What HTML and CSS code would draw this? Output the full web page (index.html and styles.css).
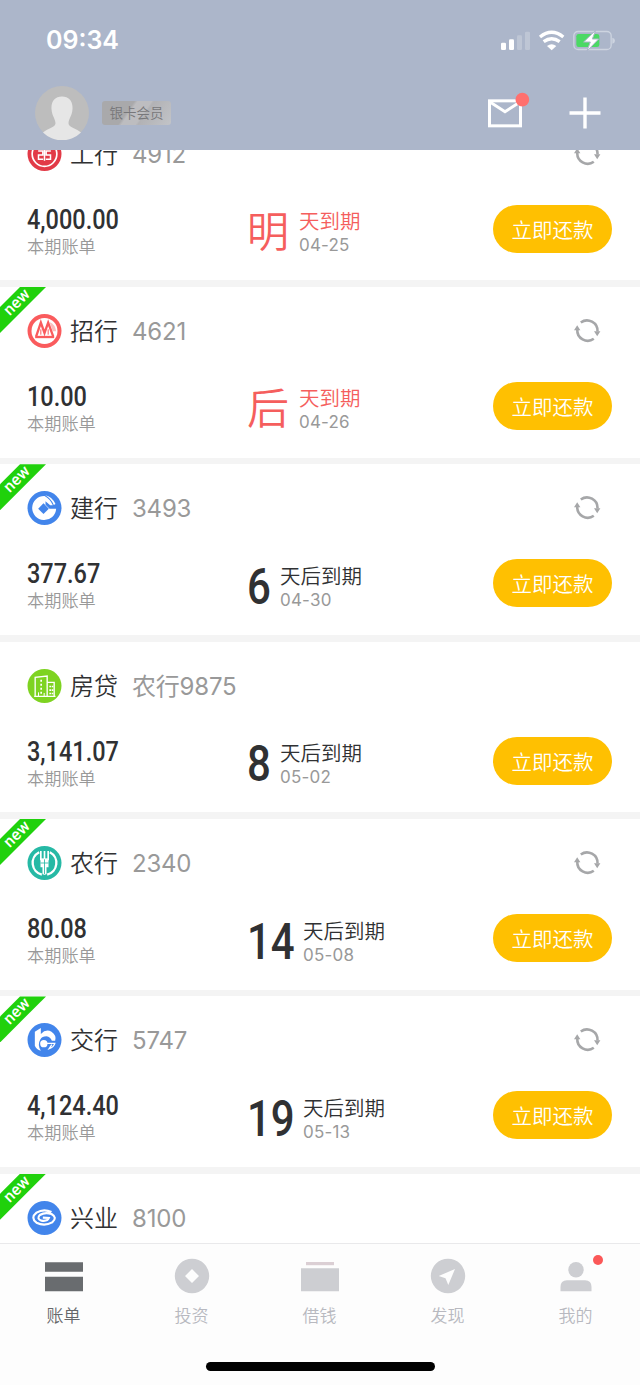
FILE: index.html
```html
<!DOCTYPE html>
<html lang="zh-CN">
<head>
<meta charset="utf-8">
<title>账单</title>
<link rel="stylesheet" href="styles.css">
</head>
<body>
<svg class="defs" width="0" height="0" aria-hidden="true">
  <symbol id="refresh" viewBox="0 0 28 28">
    <path d="M7.800 5.500A10.500 10.500 0 0 1 24.500 14.500M20.800 21.800A10.500 10.500 0 0 1 4.300 12.500" fill="none" stroke="#a6a7a9" stroke-width="2.600"/>
    <path d="M1 13.200 4.200 8.200 7.400 13.200ZM21 14.200H27.400L24.200 19.200Z" fill="#a6a7a9"/>
  </symbol>
</svg>
<header class="top">
  <div class="status">
    <span class="time">09:34</span>
    <svg class="status-icons" viewBox="120 84 348 66">
      <g fill="#fff"><rect x="123" y="125" width="15" height="22" rx="4"/><rect x="147" y="115" width="15" height="32" rx="4"/><g opacity=".22"><rect x="171" y="103" width="15" height="44" rx="4"/><rect x="195" y="92" width="15" height="55" rx="4"/></g></g>
      <g fill="none" stroke="#fff" stroke-width="10"><path d="M240 108Q275 80 310 108M251 122Q275 104 299 122"/></g>
      <path d="M261 135Q275 124 289 135L275 148Z" fill="#fff"/>
      <rect x="341.500" y="91.500" width="112" height="54" rx="13" fill="none" stroke="#cdd4e0" stroke-width="4"/>
      <path d="M457 110Q465 112 465 119T457 128Z" fill="#cdd4e0"/>
      <rect x="349" y="99" width="69" height="39" rx="7" fill="#4bd964"/>
      <path d="M407 88 371 123H391L381 150 416 114H397Z" fill="#fff" stroke="#acb6ca" stroke-width="3"/>
    </svg>
  </div>
  <div class="profile">
    <svg class="avatar" viewBox="0 0 54 54"><circle cx="27" cy="27" r="27" fill="#bdbdbd"/><path d="M27 10.500C20 10.500 16 15 16.500 23C17 30 20 32 20.500 37C20.800 41.500 12 42.500 8 46.500A27 27 0 0 0 46 46.500C42 42.500 33.200 41.500 33.500 37C34 32 37 30 37.500 23C38 15 34 10.500 27 10.500Z" fill="#e6e6e6"/></svg>
    <span class="level">银卡会员</span>
    <svg class="mail" viewBox="81 275 129 111"><rect x="88.500" y="301.500" width="93" height="75" fill="none" stroke="#fff" stroke-width="9"/><path d="M90 305 135 334 180 305" fill="none" stroke="#fff" stroke-width="9"/><circle cx="187" cy="298" r="20.500" fill="#ff706e"/></svg>
    <svg class="plus" viewBox="0 0 32 32"><path d="M16 .5V31.500M.5 16H31.500" stroke="#fff" stroke-width="3.400"/></svg>
  </div>
</header>
<main class="bills">
  <div class="list">
    <section class="card">
      <div class="bank">
        <svg class="logo" viewBox="0 0 102 102"><circle cx="51" cy="51" r="51" fill="#e23a47"/><circle cx="51" cy="51" r="37" fill="none" stroke="#fff" stroke-width="5"/><path d="M32 42H46V54H33V67H47M70 42H56V54H69V67H55M51 34V71" fill="none" stroke="#fff" stroke-width="4.500"/></svg>
        <span class="name">工行</span><span class="tail">4912</span>
        <svg class="refresh"><use href="#refresh"/></svg>
      </div>
      <div class="detail">
        <div class="amount"><b>4,000.00</b><small>本期账单</small></div>
        <div class="due urgent"><span class="word">明</span><div><p>天到期</p><time>04-25</time></div></div>
        <button class="pay">立即还款</button>
      </div>
    </section>
    <section class="card">
      <span class="ribbon"><i>new</i></span>
      <div class="bank">
        <svg class="logo" viewBox="0 0 102 102"><circle cx="51" cy="51" r="51" fill="#fa5b5d"/><circle cx="51" cy="51" r="39" fill="#fff"/><path d="M66 24A34 34 0 0 1 86 52H76Z" fill="#fcbdbd"/><path d="M26 67 40 26 51 57 62 26 77 67" fill="none" stroke="#fa5b5d" stroke-width="7"/><path d="M40 46V62M62 46V62" stroke="#fa5b5d" stroke-width="3"/><path d="M23 69H80" stroke="#fa5b5d" stroke-width="7"/></svg>
        <span class="name">招行</span><span class="tail">4621</span>
        <svg class="refresh"><use href="#refresh"/></svg>
      </div>
      <div class="detail">
        <div class="amount"><b>10.00</b><small>本期账单</small></div>
        <div class="due urgent"><span class="word">后</span><div><p>天到期</p><time>04-26</time></div></div>
        <button class="pay">立即还款</button>
      </div>
    </section>
    <section class="card">
      <span class="ribbon"><i>new</i></span>
      <div class="bank">
        <svg class="logo" viewBox="0 0 102 102"><circle cx="51" cy="51" r="51" fill="#4285eb"/><path d="M51 15A36 36 0 1 0 86 53H66L54 41V31L68 43H76Q68 24 51 15Z" fill="#fff"/><path d="M48 37 64 53 48 69 32 53Z" fill="#4285eb"/><path d="M53 13Q73 17 84 39L79 42Q71 23 53 13Z" fill="#fff"/></svg>
        <span class="name">建行</span><span class="tail">3493</span>
        <svg class="refresh"><use href="#refresh"/></svg>
      </div>
      <div class="detail">
        <div class="amount"><b>377.67</b><small>本期账单</small></div>
        <div class="due"><span class="days one">6</span><div><p>天后到期</p><time>04-30</time></div></div>
        <button class="pay">立即还款</button>
      </div>
    </section>
    <section class="card">
      <div class="bank">
        <svg class="logo" viewBox="0 0 102 102"><circle cx="51" cy="51" r="51" fill="#7ed321"/><path d="M23 82V25L59 21V82M61 40H80V82M20 82H84" fill="none" stroke="#fff" stroke-width="4"/><path d="M41 32V38M41 44V50M41 56V62M41 68V74M68 50V55M68 61V66M68 71V76M75 50V55M75 61V66M75 71V76" stroke="#fff" stroke-width="5"/><path d="M33 70V82M50 72V82" stroke="#fff" stroke-width="3"/></svg>
        <span class="name">房贷</span><span class="tail">农行9875</span>
      </div>
      <div class="detail">
        <div class="amount"><b>3,141.07</b><small>本期账单</small></div>
        <div class="due"><span class="days one">8</span><div><p>天后到期</p><time>05-02</time></div></div>
        <button class="pay">立即还款</button>
      </div>
    </section>
    <section class="card">
      <span class="ribbon"><i>new</i></span>
      <div class="bank">
        <svg class="logo" viewBox="0 0 102 102"><circle cx="51" cy="51" r="51" fill="#26b9a5"/><path d="M35 19A36 36 0 0 0 43 86M67 19A36 36 0 0 1 59 86" fill="none" stroke="#fff" stroke-width="7"/><path d="M40 15V40H62V15M51 15V87" fill="none" stroke="#fff" stroke-width="5"/><path d="M39 38H63V64H57V85H45V64H39Z" fill="#fff"/><path d="M39 51H63M51 40V85" stroke="#26b9a5" stroke-width="2.500"/></svg>
        <span class="name">农行</span><span class="tail">2340</span>
        <svg class="refresh"><use href="#refresh"/></svg>
      </div>
      <div class="detail">
        <div class="amount"><b>80.08</b><small>本期账单</small></div>
        <div class="due"><span class="days two">14</span><div><p>天后到期</p><time>05-08</time></div></div>
        <button class="pay">立即还款</button>
      </div>
    </section>
    <section class="card">
      <span class="ribbon"><i>new</i></span>
      <div class="bank">
        <svg class="logo" viewBox="0 0 102 102"><circle cx="51" cy="51" r="51" fill="#4285eb"/><path d="M22 26 40 15V33Q55 17 72 26Q88 37 83 53H73Q69 42 57 40Q44 40 38 50Q29 65 40 83Q27 80 22 68Z" fill="#fff"/><circle cx="49" cy="62" r="11" fill="#fff"/><path d="M49 61H82Q79 72 65 77L73 65" fill="none" stroke="#fff" stroke-width="4"/></svg>
        <span class="name">交行</span><span class="tail">5747</span>
        <svg class="refresh"><use href="#refresh"/></svg>
      </div>
      <div class="detail">
        <div class="amount"><b>4,124.40</b><small>本期账单</small></div>
        <div class="due"><span class="days two">19</span><div><p>天后到期</p><time>05-13</time></div></div>
        <button class="pay">立即还款</button>
      </div>
    </section>
    <section class="card">
      <span class="ribbon"><i>new</i></span>
      <div class="bank">
        <svg class="logo" viewBox="0 0 102 102"><circle cx="51" cy="51" r="51" fill="#4285eb"/><path d="M72 33Q48 22 27 35Q8 50 27 65Q51 77 74 64Q91 50 72 39Q53 32 37 42Q26 53 42 59Q60 62 64 51L46 50" fill="none" stroke="#fff" stroke-width="6.500"/></svg>
        <span class="name">兴业</span><span class="tail">8100</span>
      </div>
    </section>
  </div>
</main>
<nav class="tabs">
  <div class="tab-row">
    <a class="tab active"><svg viewBox="0 0 40 36"><path d="M1 4.300H39V13.700H1ZM1 18.700H39V33.300H1Z"/></svg>账单</a>
    <a class="tab"><svg viewBox="0 0 40 36"><path fill-rule="evenodd" d="M20 .8A17.200 17.200 0 1 1 20 35.200A17.200 17.200 0 1 1 20 .8ZM20 11 13 18 20 25 27 18Z"/></svg>投资</a>
    <a class="tab"><svg viewBox="0 0 40 36"><path d="M6 4H34V7.200H6Z" fill="#dbcfd4"/><path d="M1 10.300H39V33.300H1Z"/></svg>借钱</a>
    <a class="tab"><svg viewBox="0 0 40 36"><path fill-rule="evenodd" d="M20 .8A17.200 17.200 0 1 1 20 35.200A17.200 17.200 0 1 1 20 .8ZM27 11 10.700 18 17.500 20.300 20.300 27Z"/></svg>发现</a>
    <a class="tab"><svg viewBox="0 0 40 36"><circle cx="20" cy="11.800" r="7.700"/><path d="M4.500 33.300V29Q4.500 22.300 11 22.300H29Q35.500 22.300 35.500 29V33.300Z"/></svg>我的<span class="dot"></span></a>
  </div>
  <div class="home"></div>
</nav>
</body>
</html>
```
FILE: styles.css
```css
* { box-sizing: border-box; }
body {
  margin: 0;
  width: 640px;
  height: 1385px;
  overflow: hidden;
  display: flex;
  flex-direction: column;
  background: #fff;
  color: #303133;
  font-family: Inter, "Noto Sans CJK SC", sans-serif;
  font-weight: 350;
}
.defs { position: absolute; }
svg { display: block; flex: none; }
p { margin: 0; }

.top { height: 150px; flex: none; background: #acb6ca; }
.status { height: 75px; padding: 4px 24px 0 46px; display: flex; align-items: center; justify-content: space-between; }
.time { color: #fff; font-size: 25px; font-weight: 600; letter-spacing: 0; }
.status-icons { width: 116px; height: 22px; }
.profile { height: 75px; padding: 0 39px 0 35px; display: flex; align-items: center; }
.avatar { width: 54px; height: 54px; }
.level {
  width: 69px;
  height: 24px;
  margin-left: 13px;
  border-radius: 3px;
  background: linear-gradient(125deg, #a9a9ab 0 38%, #bdbdc0 42% 58%, #b2b2b5 61%, #c2c4c8);
  color: #77777a;
  font-size: 13.500px;
  line-height: 24px;
  text-align: center;
}
.mail { width: 43px; height: 37px; margin: -5px 0 0 316px; }
.plus { width: 32px; height: 32px; margin-left: auto; }

.bills { height: 1093px; flex: none; overflow: hidden; }
.list { margin-top: -40.500px; display: flex; flex-direction: column; gap: 6.700px; background: #f4f4f4; }
.card { position: relative; height: 170.700px; flex: none; background: #fff; }
.bank { height: 88px; padding: 0 39px 0 27px; display: flex; align-items: center; }
.logo { width: 35px; height: 34px; }
.name { margin-left: 8px; padding-top: 2px; font-size: 24px; line-height: 34px; width: 48px; white-space: nowrap; }
.tail { margin-left: 14px; padding-top: 2px; font-size: 24px; font-weight: 400; line-height: 34px; color: #999; white-space: nowrap; letter-spacing: -.2px; }
.refresh { width: 28px; height: 28px; margin-left: auto; }
.detail { height: 62px; padding: 0 28px 0 27px; display: flex; align-items: center; }
.amount { width: 220px; padding-top: 6px; }
.amount b {
  display: block;
  font: 500 27px/30px Roboto, sans-serif;
  transform: scaleX(.87);
  transform-origin: left;
}
.amount small { display: block; font-size: 17.200px; line-height: 24px; color: #999; }
.due { padding-top: 7px; display: flex; align-items: center; }
.word { width: 52px; font-size: 42px; line-height: 56px; }
.days { font: 500 50px/56px Roboto, sans-serif; transform: scaleX(.84); transform-origin: left; white-space: nowrap; }
.one { width: 33px; }
.two { width: 56px; }
.due p { font-size: 20.500px; line-height: 26px; }
.due time { display: block; font-size: 17px; font-weight: 400; line-height: 20px; color: #999; letter-spacing: .2px; }
.urgent { color: #f55e5d; }
.pay {
  width: 119px;
  height: 48px;
  margin-left: auto;
  padding: 0;
  border: 0;
  border-radius: 24px;
  background: #ffc001;
  color: #fff;
  font: 350 20.500px/46px "Noto Sans CJK SC", sans-serif;
}
.ribbon {
  position: absolute;
  left: 0;
  top: 0;
  width: 46px;
  height: 46px;
  background: #20d10c;
  clip-path: polygon(20px 0, 46px 0, 0 46px, 0 20px);
}
.ribbon i {
  position: absolute;
  left: 0;
  top: 6px;
  width: 34px;
  color: #fff;
  font: 500 16px/18px Roboto, sans-serif;
  letter-spacing: .3px;
  text-align: center;
  transform: rotate(-45deg);
}

.tabs { height: 142px; flex: none; border-top: 1px solid #e9e9eb; background: #fdfdfd; }
.tab-row { display: flex; height: 118px; }
.tab { position: relative; width: 128px; padding-top: 14px; padding-right: 1px; display: flex; flex-direction: column; align-items: center; font-size: 17px; line-height: 24px; color: #b8b9c0; }
.tab svg { width: 40px; height: 36px; margin-bottom: 10px; fill: #cdced2; }
.active { color: #66686b; }
.active svg { fill: #696c6f; }
.dot { position: absolute; left: 93px; left: calc(50% + 29px); top: 11px; width: 10px; height: 10px; border-radius: 50%; background: #fb5858; }
.dot { left: 81px; }
.home { width: 229px; height: 9px; margin: 0 auto; border-radius: 5px; background: #000; }
```
